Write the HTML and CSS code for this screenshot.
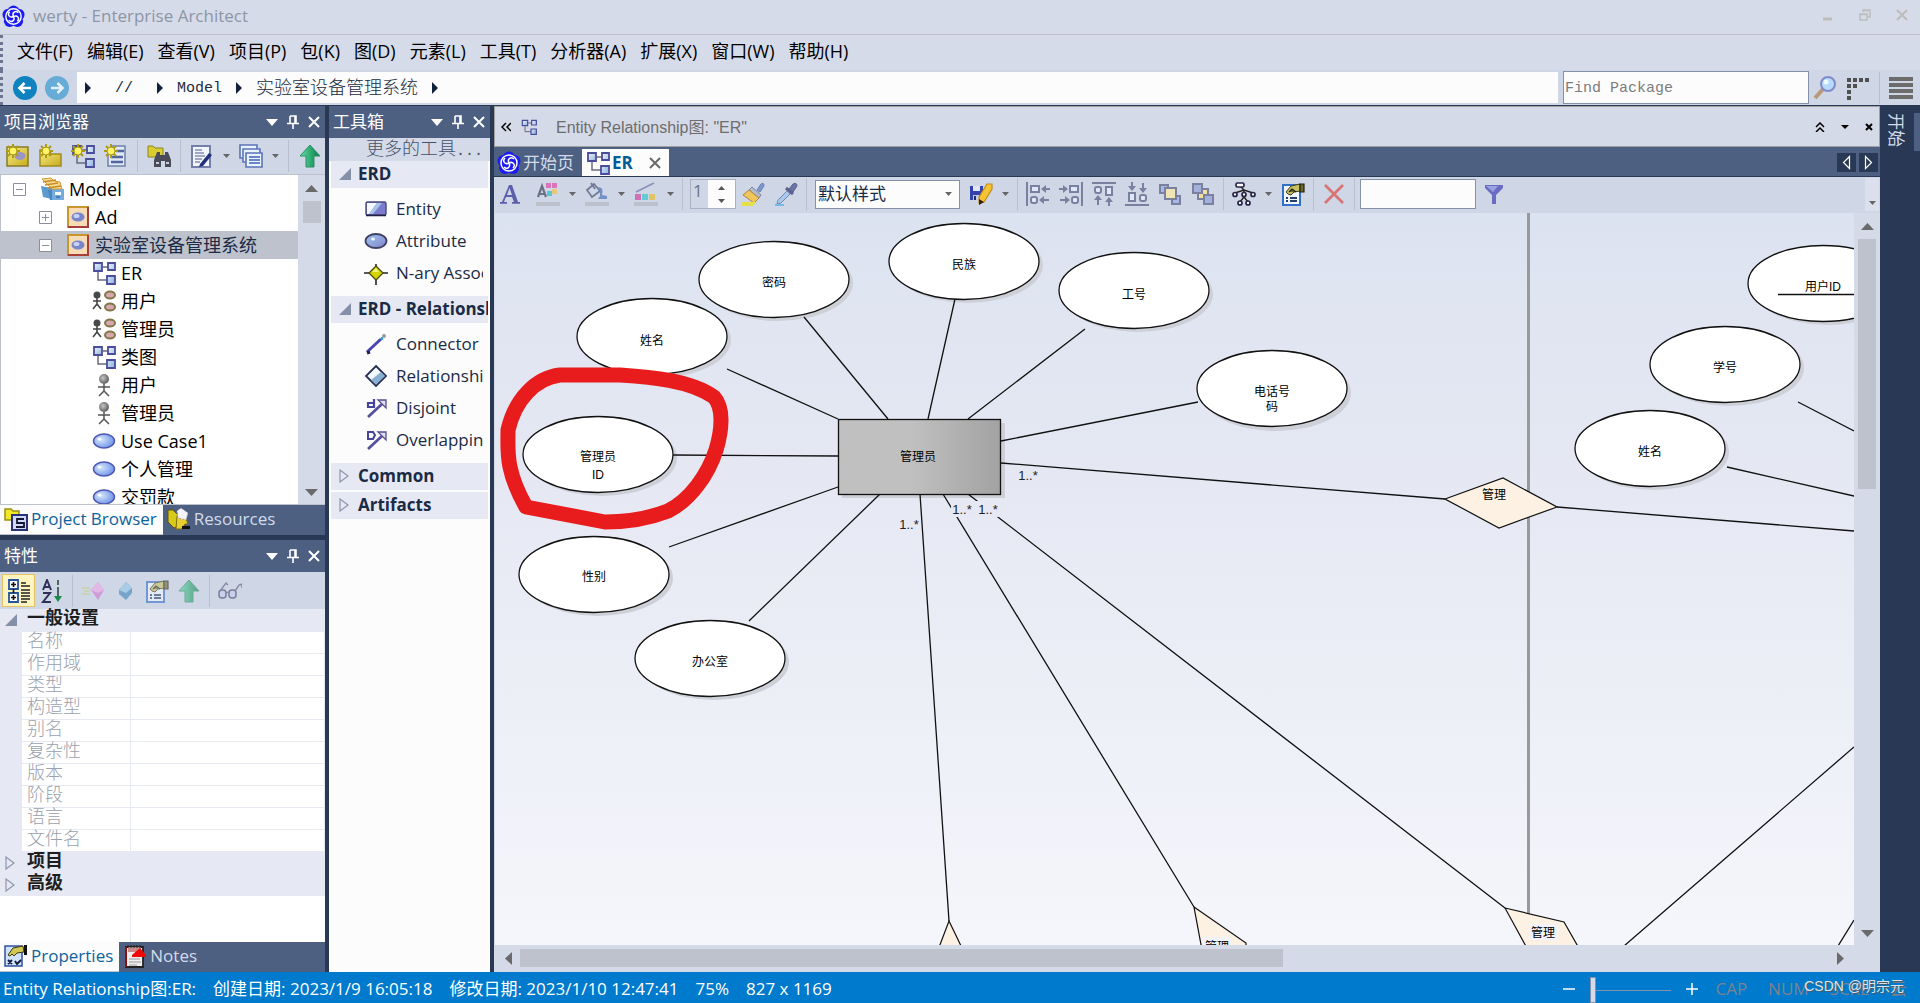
FILE: index.html
```html
<!DOCTYPE html>
<html lang="zh-CN">
<head>
<meta charset="utf-8">
<title>werty - Enterprise Architect</title>
<link rel="stylesheet" href="styles.css">
</head>
<body>
<svg class="defs" aria-hidden="true">
  <defs>
    <linearGradient id="steel" x1="0" y1="0" x2="1" y2="1"><stop offset="0" stop-color="#eef6fd"/><stop offset="1" stop-color="#8fb4dd"/></linearGradient>
    <linearGradient id="violet" x1="0" y1="0" x2="1" y2="1"><stop offset="0" stop-color="#9fc6ee"/><stop offset="1" stop-color="#8484cc"/></linearGradient>
    <linearGradient id="gold" x1="0" y1="0" x2="1" y2="1"><stop offset="0" stop-color="#f4ee88"/><stop offset="1" stop-color="#c9ab1c"/></linearGradient>
    <linearGradient id="green" x1="0" y1="0" x2="1" y2="0"><stop offset="0" stop-color="#5fe0a2"/><stop offset="1" stop-color="#067a49"/></linearGradient>
    <radialGradient id="oval" cx=".35" cy=".4" r=".8"><stop offset="0" stop-color="#d4e8fb"/><stop offset="1" stop-color="#5a82e8"/></radialGradient>
    <radialGradient id="ball" cx=".4" cy=".4" r=".7"><stop offset="0" stop-color="#c4c4c4"/><stop offset="1" stop-color="#505050"/></radialGradient>
    <linearGradient id="steelgrey" x1="0" y1="0" x2="1" y2="0"><stop offset="0" stop-color="#c0c0c0"/><stop offset=".45" stop-color="#c0c0c0"/><stop offset="1" stop-color="#a2a2a2"/></linearGradient>
  </defs>
  <symbol id="i-logo" viewBox="0 0 24 24"><g fill="#1c1cf0"><circle cx="12" cy="6.500" r="6"/><circle cx="17.500" cy="10" r="6"/><circle cx="16" cy="17" r="6"/><circle cx="8" cy="17" r="6"/><circle cx="6.500" cy="10" r="6"/></g><g fill="none" stroke="#fff" stroke-width="1.500"><circle cx="12" cy="12" r="8"/><path d="M12 12c-2-4 2-7 5-4M12 12c4-2 7 2 4 5M12 12c2 4-2 7-5 4M12 12c-4 2-7-2-4-5"/></g></symbol>
  <symbol id="i-spark" viewBox="0 0 14 14"><path d="M7 0v14M0 7h14M2 2l10 10M12 2L2 12" stroke="#b09a10" stroke-width="2"/><circle cx="7" cy="7" r="4" fill="#fff36a" stroke="#a89510"/></symbol>
  <symbol id="i-newpkg" viewBox="0 0 24 24"><path d="M2 3h21v19H2z" fill="url(#gold)" stroke="#8a7a28" stroke-width="1.5"/><ellipse cx="15" cy="12" rx="5.500" ry="4" fill="#9a94c8"/><use href="#i-spark" x="1" y="0" width="14" height="14"/></symbol>
  <symbol id="i-newfolder" viewBox="0 0 24 24"><path d="M2 6h9l2 4h10v12H2z" fill="url(#gold)" stroke="#a28a1c" stroke-width="1.500"/><use href="#i-spark" x="1" y="0" width="14" height="14"/></symbol>
  <symbol id="i-diagram" viewBox="0 0 24 24"><path d="M11 6h5M6 11v8h9" fill="none" stroke="#6a6a80" stroke-width="1.500"/><g fill="url(#steel)" stroke="#4c4c9c" stroke-width="1.800"><path d="M2 2h8v8H2z"/><path d="M16 2h7v7h-7zM15 15h8v8h-8z"/></g></symbol>
  <symbol id="i-newdiagram" viewBox="0 0 24 24"><use href="#i-diagram"/><use href="#i-spark" x="0" y="0" width="14" height="14"/></symbol>
  <symbol id="i-newelement" viewBox="0 0 24 24"><path d="M7 2h14v20H4V10z" fill="#dfe9f7" stroke="#7080a8" stroke-width="1.500"/><path d="M12 7h8M7 13h12M7 18h12" stroke="#54649c" stroke-width="2.500"/><use href="#i-spark" x="0" y="0" width="14" height="14"/></symbol>
  <symbol id="i-find" viewBox="0 0 24 24"><path d="M1 2h5l2 2h8v9H1z" fill="#d8cc30" stroke="#8e8420"/><path d="M7 23V16l3-8h3v3h5V8h3l3 8v7h-6v-6h-4v6z" fill="#4b4a58"/><path d="M9 19h3M19 19h3" stroke="#c8ccd8" stroke-width="2"/></symbol>
  <symbol id="i-doc" viewBox="0 0 24 24"><path d="M2 2h18v21H2z" fill="#f2f6fc" stroke="#7480ac" stroke-width="2"/><path d="M5 6h7M5 9h9M5 12h10M5 15h7M5 18h5" stroke="#8490b4" stroke-width="1.400"/><path d="M10 20l9-11 3 2-9 11-4 1z" fill="#26307c"/></symbol>
  <symbol id="i-windows" viewBox="0 0 24 24"><g fill="#eaf2fc" stroke="#5b74b8" stroke-width="1.600"><path d="M1 1h17v13H1z"/><path d="M4 5h17v13H4z"/><path d="M7 9h16v14H7z"/></g><path d="M10 13h11M10 16h11M10 19h11" stroke="#3d64b8" stroke-width="1.600"/></symbol>
  <symbol id="i-up" viewBox="0 0 24 24"><path d="M12 1l10 11h-6v11H8V12H2z" fill="url(#green)" stroke="#2f8f66"/></symbol>
  <symbol id="i-model" viewBox="0 0 24 24"><path d="M1 9l15 3v11L3 20z" fill="#5b9bd0"/><path d="M8 13h16v10H10z" fill="#4d87c0"/><path d="M12 12h12v11H12z" fill="#74ace0"/><path d="M2 2l9-1 3 3 6 1 2 7h-10z" fill="#f7dc92" stroke="#cf9a34"/><path d="M3 5l13-2M5 8l13-2M7 11l14-2" stroke="#c98b28" stroke-width="1.400"/><path d="M15 15h6v3h-6z" fill="#fff"/><path d="M16 20h4" stroke="#204c7c"/></symbol>
  <symbol id="i-package" viewBox="0 0 24 24"><path d="M2 2h20v20H2z" fill="#f7dcb6" stroke="#c8962c" stroke-width="2"/><path d="M22 2v20H2" fill="none" stroke="#a83e38" stroke-width="2"/><ellipse cx="12" cy="12" rx="6.500" ry="4.500" fill="#7a86cc"/><ellipse cx="10.500" cy="11" rx="3" ry="2" fill="#c9d4f4"/></symbol>
  <symbol id="i-actor" viewBox="0 0 24 24"><circle cx="12" cy="6" r="5" fill="url(#ball)"/><path d="M12 11v7M6 14h12M12 18l-5 5M12 18l5 5" fill="none" stroke="#555" stroke-width="1.500"/></symbol>
  <symbol id="i-usecases" viewBox="0 0 24 24"><circle cx="5" cy="6" r="3.500" fill="#484848"/><path d="M5 9v6M1 12h8M5 15l-4 5M5 15l4 5" fill="none" stroke="#444" stroke-width="1.600"/><g fill="#d8a8ac" stroke="#807848" stroke-width="2"><ellipse cx="18" cy="6" rx="5" ry="3.500"/><ellipse cx="18" cy="18" rx="5" ry="3.500"/></g></symbol>
  <symbol id="i-oval" viewBox="0 0 24 24"><ellipse cx="12" cy="12" rx="10.500" ry="7" fill="url(#oval)" stroke="#5058b0" stroke-width="1.500"/><ellipse cx="7.500" cy="10" rx="2" ry="1.500" fill="#fff"/></symbol>
  <symbol id="i-browser" viewBox="0 0 24 24"><path d="M1 2h6l2 2h6v9H1z" fill="#f0e828" stroke="#9a9010" stroke-width="1.500"/><path d="M8 8h15v15H8z" fill="#cfd8f4" stroke="#2c3278" stroke-width="2"/><path d="M20 12h-7v4h7v4h-8" fill="none" stroke="#151533" stroke-width="1.800"/></symbol>
  <symbol id="i-resources" viewBox="0 0 24 24"><path d="M1 3h5l5 5 1 11-5 2-6-6z" fill="#d8c818" stroke="#5c5410"/><path d="M10 9h8l3 8h-3l-3 5h-6z" fill="#e8d030" stroke="#7a6c10"/><path d="M14 1l7 5-2 7-8-2-1-7z" fill="#f4f4fa" stroke="#9a9aae" stroke-dasharray="2 1.500"/><path d="M15 19h8v3h-8z" fill="#111"/></symbol>
  <symbol id="i-categ" viewBox="0 0 24 24"><path d="M2 1h9v9H2zM2 14h9v9H2z" fill="#fff" stroke="#24549c" stroke-width="1.800"/><path d="M4 5.500h5M6.500 3v5M4 18.500h5M6.500 16v5M6.500 10v4" stroke="#111" stroke-width="1.600"/><path d="M14 4h5M14 7h9M14 11h9M14 14h9M14 17h9M14 20h9M14 23h6" stroke="#222" stroke-width="1.400"/></symbol>
  <symbol id="i-az" viewBox="0 0 24 24"><path d="M3 11l4-10 4 10M4 8h6M3 14h7L3 23h8" fill="none" stroke="#303058" stroke-width="2"/><path d="M18 1v5M18 8v12" stroke="#2c4c40" stroke-width="1.600"/><path d="M14 17l4 6 4-6z" fill="#188a48"/></symbol>
  <symbol id="i-pink" viewBox="0 0 24 24"><path d="M1 9h8M3 12h6M1 15h8" stroke="#c8d4a4" stroke-width="1.500"/><path d="M17 3l6 8-6 10-7-10z" fill="#cf9bd8"/><path d="M17 3l6 8-6 3-7-3z" fill="#e2b9e6"/></symbol>
  <symbol id="i-blue" viewBox="0 0 24 24"><path d="M13 3l6 6v5l-6 7-7-6v-4z" fill="#78a4cc"/><path d="M13 3l6 6-6 5-7-3z" fill="#a9cbe6"/></symbol>
  <symbol id="i-props" viewBox="0 0 24 24"><path d="M2 3h17v20H2z" fill="#f2f7fe" stroke="#3470c8" stroke-width="2"/><path d="M5 16h2M9 16h7M5 19h2M9 19h7" stroke="#24406c" stroke-width="1.800"/><path d="M5 10l5-6 9-2v7l-6 1-3 3-3-1z" fill="#c8c060" stroke="#403c14"/><path d="M8 10l3-3 4 3M19 2h4v8h-4z" fill="#6b6830" stroke="#22200a" stroke-width="1.200"/></symbol>
  <symbol id="i-glasses" viewBox="0 0 24 24"><g fill="#c9d0ec" stroke="#7a7e9c" stroke-width="1.500"><rect x="1" y="11" width="7" height="8" rx="3"/><rect x="11" y="11" width="7" height="8" rx="3"/></g><path d="M8 14l3-1M2 12l6-8 2 2M17 12l4-6 3-1v4" fill="none" stroke="#888ca4" stroke-width="1.400"/></symbol>
  <symbol id="i-propstab" viewBox="0 0 24 24"><path d="M1 2h17v20H1z" fill="#cfe2fa" stroke="#30509c" stroke-width="1.500"/><path d="M4 16l4 4M8 16l-4 4M11 17l2 3 4-4" fill="none" stroke="#10183c" stroke-width="1.800"/><path d="M4 11l5-7 10-2 1 6-7 1-3 3-2-2-2 2z" fill="#d0c850" stroke="#3c3810"/><path d="M20 1h3v10h-3z" fill="#111"/></symbol>
  <symbol id="i-notes" viewBox="0 0 24 24"><path d="M3 3h17v20H3z" fill="#efefef" stroke="#222" stroke-width="1.800"/><path d="M2 3h2v20H2z" fill="#8c1010"/><path d="M5 3h13v5H5z" fill="#c98a8a"/><path d="M5 1v3M8 1v3M11 1v3M14 1v3M17 1v3" stroke="#222"/><path d="M9 11l8-7 6 7v2H9z" fill="#f00808"/><path d="M6 15h11M6 18h12M6 21h8" stroke="#999" stroke-width="1.200"/></symbol>
  <symbol id="i-entity" viewBox="0 0 24 24"><path d="M2 5h20v13H2z" fill="#7c7ccc"/><path d="M3 6h10L5 17H3z" fill="#f4f8ff"/><path d="M13 6h5L9 17H5z" fill="#a9c4ec"/><rect x="2" y="5" width="20" height="13" rx="1.500" fill="none" stroke="#4a4a78" stroke-width="1.400"/><path d="M2 18.500h20" stroke="#222248" stroke-width="1.500"/></symbol>
  <symbol id="i-attribute" viewBox="0 0 24 24"><ellipse cx="12" cy="12" rx="10.500" ry="7" fill="url(#violet)" stroke="#3e4264" stroke-width="1.800"/><ellipse cx="9" cy="10" rx="2" ry="1.500" fill="#e8f6ff"/></symbol>
  <symbol id="i-nary" viewBox="0 0 24 24"><path d="M0 12h24M12 3v21" stroke="#222" stroke-width="1.600"/><path d="M12 5l7 7-7 7-7-7z" fill="#d4d400" stroke="#4c4c10" stroke-width="1.300"/><path d="M12 7l3 4H8z" fill="#f2f27a"/></symbol>
  <symbol id="i-connector" viewBox="0 0 24 24"><path d="M3 20L17 7" stroke="#4a44b0" stroke-width="3"/><path d="M3 21l3-1" stroke="#20205c" stroke-width="3"/><path d="M17 7l2-1" stroke="#22a0d0" stroke-width="3"/><circle cx="20" cy="4" r="2" fill="#999"/></symbol>
  <symbol id="i-rel" viewBox="0 0 24 24"><path d="M12 2l10 10-10 10L2 12z" fill="#f2fafe" stroke="#262e50" stroke-width="1.800"/><path d="M7 16L17 8l4 4-9 8.500z" fill="#88aed2"/></symbol>
  <symbol id="i-disjoint" viewBox="0 0 24 24"><path d="M4 21L18 8" stroke="#54509c" stroke-width="2.800"/><path d="M14 4h8v8z" fill="#dcdcf4" stroke="#54508c" stroke-width="1.300"/><path d="M10 3v9M9 7H4v4h6" fill="none" stroke="#48449c" stroke-width="2.200"/></symbol>
  <symbol id="i-overlap" viewBox="0 0 24 24"><path d="M4 21L18 8" stroke="#54509c" stroke-width="2.800"/><path d="M14 4h8v8z" fill="#dcdcf4" stroke="#54508c" stroke-width="1.300"/><path d="M4 4h5l2 3-2 4H4z" fill="none" stroke="#48449c" stroke-width="2"/></symbol>
  <symbol id="i-font" viewBox="0 0 24 24"><path d="M2 20h7v1.800H2zM14 20h8v1.800h-8zM4 20L11 3h3l6 17h-4l-2-5H8l-2 5zM9 13h5l-2.500-7z" fill="#5c60ac" fill-rule="evenodd"/></symbol>
  <symbol id="i-fontcolor" viewBox="0 0 24 24"><path d="M2 15L6 4l4 11M3 12h6" fill="none" stroke="#6c7084" stroke-width="2.200"/><path d="M10 1h5v5h-5zM16 1h5v5h-5z" fill="#dc74bc"/><path d="M16 7h5v5h-5z" fill="#e8c878"/><path d="M11 9h5v5h-5z" fill="#58c8d0"/><path d="M0 20h24v4H0z" fill="#bcc1cc"/></symbol>
  <symbol id="i-fill" viewBox="0 0 24 24"><path d="M2 8l7-6 6 7-8 6z" fill="#ced8ec" stroke="#747a94" stroke-width="1.800"/><path d="M6 1l4 6" stroke="#747a94" stroke-width="1.800"/><path d="M13 5c5 0 5 4 4 8l5 1v3h-9l2-3V8z" fill="#7292c8"/><path d="M0 20h24v4H0z" fill="#bcc1cc"/></symbol>
  <symbol id="i-line" viewBox="0 0 24 24"><path d="M2 10L20 1" stroke="#8a90bc" stroke-width="1.800"/><path d="M1 12h6v6H1z" fill="#d070b8"/><path d="M8 12h6v6H8z" fill="#62ccd4"/><path d="M15 12h6v6h-6z" fill="#e0c468"/><path d="M0 20h24v4H0z" fill="#bcc1cc"/></symbol>
  <symbol id="i-brush" viewBox="0 0 24 24"><path d="M16 8l4-6q3-2 3 2l-4 6z" fill="#7c98d0" stroke="#6480b8"/><path d="M11 5l9 8-2 3L8 8z" fill="#b4bccc" stroke="#7c8498"/><path d="M8 8l10 8-5 5-11-8z" fill="#f0c65c" stroke="#b08a3c"/><path d="M1 21h14M1 23h11" stroke="#e6e048" stroke-width="1.800"/></symbol>
  <symbol id="i-pipette" viewBox="0 0 24 24"><path d="M15 7l4-5q4-2 4 2l-4 6z" fill="#6c74a4" stroke="#5c6290"/><path d="M12 6l7 6" stroke="#5c6290" stroke-width="3"/><path d="M13 9l3 3L7 21l-4 1 1-4z" fill="#a8c8ec" stroke="#7488b0"/><path d="M1 23h9" stroke="#74b8ec" stroke-width="2"/></symbol>
  <symbol id="i-savestyle" viewBox="0 0 24 24"><path d="M1 4h13v14H1z" fill="#3442ac"/><path d="M4 4h7v5H4z" fill="#dfe5fa"/><path d="M4 13h6v5H4z" fill="#c4ccec"/><path d="M5 14h2v4H5z" fill="#20287c"/><path d="M18 2h5v5l-8 13-5 1v-6z" fill="#f4c434" stroke="#c48a1c" stroke-width="1.200"/><path d="M10 17v6l5-3z" fill="#302010"/></symbol>
  <symbol id="i-al" viewBox="0 0 24 24"><path d="M1 0v24" stroke="#7c80a0" stroke-width="2"/><g fill="#dceaf8" stroke="#7c80a0" stroke-width="2"><path d="M5 4h8v6H5z"/><rect x="5" y="15" width="6" height="6" rx="2"/></g><path d="M16 7h8M14 18h9" stroke="#7c80a0" stroke-width="2"/><path d="M20 3v8l-5-4zM18 14v8l-5-4z" fill="#7c80a0"/></symbol>
  <symbol id="i-front" viewBox="0 0 24 24"><g stroke="#7c80a0" stroke-width="2"><path d="M2 3h8v8H2zM14 14h8v8h-8z" fill="#a8b8e4"/><path d="M7 6h11v11H7z" fill="#f0e4b4"/></g></symbol>
  <symbol id="i-back" viewBox="0 0 24 24"><g stroke="#7c80a0" stroke-width="2"><path d="M7 7h10v10H7z" fill="#f0e0a0"/><path d="M2 2h9v9H2zM13 13h9v9h-9z" fill="#a4b0dc"/></g></symbol>
  <symbol id="i-tree" viewBox="0 0 24 24"><path d="M8 4l5 5M12 8v7M3 11l9-3 9 3M12 15l-4 5M12 15l4 5" fill="none" stroke="#222" stroke-width="1.400"/><g fill="#fff" stroke="#282448" stroke-width="1.700"><rect x="4" y="1" width="8" height="4" rx="1.500"/><circle cx="3" cy="12.500" r="2"/><circle cx="12" cy="12.500" r="2"/><circle cx="21" cy="12.500" r="2"/><circle cx="8" cy="21" r="2"/><circle cx="16" cy="21" r="2"/></g></symbol>
  <symbol id="i-x" viewBox="0 0 24 24"><path d="M3 3l18 18M21 3L3 21" stroke="#d87474" stroke-width="2.800"/></symbol>
  <symbol id="i-funnel" viewBox="0 0 24 24"><path d="M3 3h18v3l-7 7v9h-4v-9L3 6z" fill="#6a6cc4"/><path d="M4 4h12l-5 6z" fill="#9aa4dc"/></symbol>
  <symbol id="i-caret" viewBox="0 0 7 4"><path d="M0 0h7L3.500 4z" fill="#666"/></symbol>
  <symbol id="i-pin" viewBox="0 0 12 14"><path d="M3 1h6v7M3 1v7M8 1v7M0 8.500h12M6 9v5" fill="none" stroke="#fff" stroke-width="1.600"/></symbol>
  <symbol id="i-close" viewBox="0 0 12 12"><path d="M1 1l10 10M11 1L1 11" stroke="currentColor" stroke-width="2"/></symbol>
  <symbol id="i-down" viewBox="0 0 12 7"><path d="M0 0h12L6 7z" fill="currentColor"/></symbol>
  <symbol id="i-open" viewBox="0 0 12 12"><path d="M12 0v12H0z" fill="#8490a8"/></symbol>
  <symbol id="i-shut" viewBox="0 0 12 14"><path d="M1 1v12l8-6z" fill="none" stroke="#8c96ac" stroke-width="1.200"/></symbol>
  <symbol id="i-crumb" viewBox="0 0 6 12"><path d="M0 0v12l6-6z" fill="#12223c"/></symbol>
</svg>

<header class="titlebar">
  <svg class="ic"><use href="#i-logo"/></svg>
  <span class="title">werty - Enterprise Architect</span>
  <div class="winctl">
    <button aria-label="最小化"><svg width="12" height="12"><path d="M1 10h9" stroke="#bdbdbd" stroke-width="3"/></svg></button>
    <button aria-label="还原"><svg width="12" height="12"><path d="M4 3V1h7v7H9M3.500 1.500H11M1 5h7v6H1zM1 5.500h7" fill="none" stroke="#bdbdbd" stroke-width="1.500"/></svg></button>
    <button aria-label="关闭"><svg width="12" height="12"><use href="#i-close"/></svg></button>
  </div>
</header>

<nav class="menubar">
  <button>文件(F)</button><button>编辑(E)</button><button>查看(V)</button><button>项目(P)</button><button>包(K)</button><button>图(D)</button><button>元素(L)</button><button>工具(T)</button><button>分析器(A)</button><button>扩展(X)</button><button>窗口(W)</button><button>帮助(H)</button>
</nav>

<div class="navbar">
  <button aria-label="后退"><svg class="ic"><circle cx="12" cy="12" r="12" fill="#1182c0"/><path d="M18 12H7M11.500 7L6.500 12l5 5" fill="none" stroke="#fff" stroke-width="2.600"/></svg></button>
  <button aria-label="前进"><svg class="ic"><circle cx="12" cy="12" r="12" fill="#66acd6"/><path d="M6 12h11M12.500 7l5 5-5 5" fill="none" stroke="#e4f0f8" stroke-width="2.600"/></svg></button>
  <div class="crumbs">
    <svg class="crumb"><use href="#i-crumb"/></svg><a href="#root">//</a>
    <svg class="crumb"><use href="#i-crumb"/></svg><a href="#model">Model</a>
    <svg class="crumb"><use href="#i-crumb"/></svg><a class="cjk" href="#lab">实验室设备管理系统</a>
    <svg class="crumb"><use href="#i-crumb"/></svg>
  </div>
  <input class="find" type="text" placeholder="Find Package" aria-label="Find Package">
  <div class="navtools">
    <button aria-label="查找"><svg class="ic"><path d="M2 22l9-10" stroke="#b89878" stroke-width="4"/><circle cx="15" cy="8" r="7" fill="#b4dcfa" stroke="#8488cc" stroke-width="2"/><circle cx="13" cy="6" r="2.500" fill="#effaff"/></svg></button>
    <button aria-label="布局"><svg class="ic"><path d="M1 4h23M1 10h11M1 16h5M1 22h5" stroke="#505050" stroke-width="4" stroke-dasharray="4 2"/></svg></button>
    <i class="sep"></i>
    <button aria-label="菜单"><svg class="ic"><path d="M0 3h24M0 9h24M0 15h24M0 21h24" stroke="#6c6c6c" stroke-width="4"/></svg></button>
  </div>
</div>

<div class="workspace">
  <div class="left">
    <section class="panel browser">
      <h2 class="caption">项目浏览器<span class="capctl"><button aria-label="选项"><svg width="12" height="7"><use href="#i-down"/></svg></button><button aria-label="固定"><svg width="12" height="14"><use href="#i-pin"/></svg></button><button aria-label="关闭"><svg width="12" height="12"><use href="#i-close"/></svg></button></span></h2>
      <div class="toolbar">
        <button aria-label="新建包"><svg class="ic"><use href="#i-newpkg"/></svg></button>
        <button aria-label="新建文件夹"><svg class="ic"><use href="#i-newfolder"/></svg></button>
        <button aria-label="新建图"><svg class="ic"><use href="#i-newdiagram"/></svg></button>
        <button aria-label="新建元素"><svg class="ic"><use href="#i-newelement"/></svg></button>
        <i class="sep"></i>
        <button aria-label="查找"><svg class="ic"><use href="#i-find"/></svg></button>
        <i class="sep"></i>
        <button aria-label="文档"><svg class="ic"><use href="#i-doc"/></svg><svg class="caret"><use href="#i-caret"/></svg></button>
        <button aria-label="窗口"><svg class="ic"><use href="#i-windows"/></svg><svg class="caret"><use href="#i-caret"/></svg></button>
        <i class="sep"></i>
        <button aria-label="上移"><svg class="ic"><use href="#i-up"/></svg></button>
      </div>
      <div class="treebox">
        <ul class="tree">
          <li class="l0"><svg class="box"><path d="M.5 .5h12v12H.5z M3 6.500h7" /></svg><svg class="ic"><use href="#i-model"/></svg>Model</li>
          <li class="l1"><svg class="box"><path d="M.5 .5h12v12H.5z M3 6.500h7M6.500 3v7" /></svg><svg class="ic"><use href="#i-package"/></svg>Ad</li>
          <li class="l1 sel"><svg class="box"><path d="M.5 .5h12v12H.5z M3 6.500h7" /></svg><svg class="ic"><use href="#i-package"/></svg>实验室设备管理系统</li>
          <li class="l2"><svg class="ic"><use href="#i-diagram"/></svg>ER</li>
          <li class="l2"><svg class="ic"><use href="#i-usecases"/></svg>用户</li>
          <li class="l2"><svg class="ic"><use href="#i-usecases"/></svg>管理员</li>
          <li class="l2"><svg class="ic"><use href="#i-diagram"/></svg>类图</li>
          <li class="l2"><svg class="ic"><use href="#i-actor"/></svg>用户</li>
          <li class="l2"><svg class="ic"><use href="#i-actor"/></svg>管理员</li>
          <li class="l2"><svg class="ic"><use href="#i-oval"/></svg>Use Case1</li>
          <li class="l2"><svg class="ic"><use href="#i-oval"/></svg>个人管理</li>
          <li class="l2"><svg class="ic"><use href="#i-oval"/></svg>交罚款</li>
        </ul>
        <div class="vscroll"><svg class="arr"><path d="M0 7h13L6.500 0z"/></svg><span class="thumb small"></span><svg class="arr end"><path d="M0 0h13L6.500 7z"/></svg></div>
      </div>
      <div class="tabs"><button class="on"><svg class="ic"><use href="#i-browser"/></svg>Project Browser</button><button><svg class="ic"><use href="#i-resources"/></svg>Resources</button></div>
    </section>

    <section class="panel props">
      <h2 class="caption">特性<span class="capctl"><button aria-label="选项"><svg width="12" height="7"><use href="#i-down"/></svg></button><button aria-label="固定"><svg width="12" height="14"><use href="#i-pin"/></svg></button><button aria-label="关闭"><svg width="12" height="12"><use href="#i-close"/></svg></button></span></h2>
      <div class="toolbar ptools">
        <button class="pressed" aria-label="分类"><svg class="ic"><use href="#i-categ"/></svg></button>
        <button aria-label="排序"><svg class="ic"><use href="#i-az"/></svg></button>
        <i class="sep"></i>
        <button aria-label="属性"><svg class="ic"><use href="#i-pink"/></svg></button>
        <button aria-label="操作"><svg class="ic"><use href="#i-blue"/></svg></button>
        <button class="dim" aria-label="特性页"><svg class="ic"><use href="#i-props"/></svg></button>
        <button class="dim" aria-label="上移"><svg class="ic"><use href="#i-up"/></svg></button>
        <i class="sep"></i>
        <button aria-label="查看"><svg class="ic"><use href="#i-glasses"/></svg></button>
      </div>
      <table class="grid">
        <colgroup><col class="c0"><col class="c1"><col></colgroup>
        <tr class="grp"><th><svg width="12" height="12"><use href="#i-open"/></svg></th><th colspan="2">一般设置</th></tr>
        <tr><th></th><td>名称</td><td></td></tr>
        <tr><th></th><td>作用域</td><td></td></tr>
        <tr><th></th><td>类型</td><td></td></tr>
        <tr><th></th><td>构造型</td><td></td></tr>
        <tr><th></th><td>别名</td><td></td></tr>
        <tr><th></th><td>复杂性</td><td></td></tr>
        <tr><th></th><td>版本</td><td></td></tr>
        <tr><th></th><td>阶段</td><td></td></tr>
        <tr><th></th><td>语言</td><td></td></tr>
        <tr><th></th><td>文件名</td><td></td></tr>
        <tr class="grp"><th><svg width="12" height="14"><use href="#i-shut"/></svg></th><th colspan="2">项目</th></tr>
        <tr class="grp"><th><svg width="12" height="14"><use href="#i-shut"/></svg></th><th colspan="2">高级</th></tr>
      </table>
      <div class="gridrest"></div>
      <div class="tabs"><button class="on"><svg class="ic"><use href="#i-propstab"/></svg>Properties</button><button><svg class="ic"><use href="#i-notes"/></svg>Notes</button></div>
    </section>
  </div>

  <section class="panel toolbox">
    <h2 class="caption">工具箱<span class="capctl"><button aria-label="选项"><svg width="12" height="7"><use href="#i-down"/></svg></button><button aria-label="固定"><svg width="12" height="14"><use href="#i-pin"/></svg></button><button aria-label="关闭"><svg width="12" height="12"><use href="#i-close"/></svg></button></span></h2>
    <button class="more">更多的工具<span lang="en">...</span></button>
    <div class="tbody">
      <h3><svg width="12" height="12"><use href="#i-open"/></svg>ERD</h3>
      <ul>
        <li><svg class="ic"><use href="#i-entity"/></svg><span>Entity</span></li>
        <li><svg class="ic"><use href="#i-attribute"/></svg><span>Attribute</span></li>
        <li><svg class="ic"><use href="#i-nary"/></svg><span>N-ary Association</span></li>
      </ul>
      <h3><svg width="12" height="12"><use href="#i-open"/></svg>ERD - Relationships</h3>
      <ul>
        <li><svg class="ic"><use href="#i-connector"/></svg><span>Connector</span></li>
        <li><svg class="ic"><use href="#i-rel"/></svg><span>Relationship</span></li>
        <li><svg class="ic"><use href="#i-disjoint"/></svg><span>Disjoint</span></li>
        <li><svg class="ic"><use href="#i-overlap"/></svg><span>Overlapping</span></li>
      </ul>
      <h3><svg width="12" height="14"><use href="#i-shut"/></svg>Common</h3>
      <h3><svg width="12" height="14"><use href="#i-shut"/></svg>Artifacts</h3>
    </div>
  </section>

  <main class="main">
    <div class="viewcap">
      <svg width="10" height="10"><path d="M5 1L1 5l4 4M10 1L6 5l4 4" fill="none" stroke="#000" stroke-width="1.500"/></svg>
      <svg width="16" height="16"><use href="#i-diagram"/></svg>
      <span>Entity Relationship图: "ER"</span>
      <div class="viewctl">
        <button aria-label="收起"><svg width="10" height="10"><path d="M1 5l4-4 4 4M1 10l4-4 4 4" fill="none" stroke="#000" stroke-width="1.500"/></svg></button>
        <button aria-label="选项"><svg width="8" height="4"><path d="M0 0h8L4 4z"/></svg></button>
        <button aria-label="关闭"><svg width="8" height="8"><path d="M1 1l6 6M7 1L1 7" stroke="#000" stroke-width="2"/></svg></button>
      </div>
    </div>
    <div class="doctabs">
      <button class="doctab"><svg class="ic"><use href="#i-logo"/></svg>开始页</button>
      <button class="doctab on"><svg class="ic"><use href="#i-diagram"/></svg>ER<svg class="x" width="12" height="12"><use href="#i-close"/></svg></button>
      <div class="tabnav">
        <button aria-label="上一页"><svg width="19" height="19"><path d="M12.500 3.500v12l-6-6z" fill="none" stroke="#fff" stroke-width="1.200"/></svg></button>
        <button aria-label="下一页"><svg width="19" height="19"><path d="M6.500 3.500v12l6-6z" fill="none" stroke="#fff" stroke-width="1.200"/></svg></button>
      </div>
    </div>
    <div class="toolbar dtools">
      <button class="wide" aria-label="字体"><svg class="ic"><use href="#i-font"/></svg></button>
      <button aria-label="文字颜色"><svg class="ic"><use href="#i-fontcolor"/></svg><svg class="caret"><use href="#i-caret"/></svg></button>
      <button aria-label="填充颜色"><svg class="ic"><use href="#i-fill"/></svg><svg class="caret"><use href="#i-caret"/></svg></button>
      <button aria-label="线条颜色"><svg class="ic"><use href="#i-line"/></svg><svg class="caret"><use href="#i-caret"/></svg></button>
      <i class="sep"></i>
      <div class="spin"><input type="text" value="1" aria-label="线宽"><svg width="27" height="28"><path d="M10 10h7l-3.500-4zM10 19h7l-3.500 4z" fill="#555"/></svg></div>
      <button aria-label="格式刷"><svg class="ic"><use href="#i-brush"/></svg></button>
      <button aria-label="取色"><svg class="ic"><use href="#i-pipette"/></svg></button>
      <i class="sep"></i>
      <div class="selwrap"><select aria-label="样式"><option>默认样式</option></select><svg class="caret"><use href="#i-caret"/></svg></div>
      <button aria-label="保存样式"><svg class="ic"><use href="#i-savestyle"/></svg><svg class="caret"><use href="#i-caret"/></svg></button>
      <i class="sep"></i>
      <button aria-label="左对齐"><svg class="ic"><use href="#i-al"/></svg></button>
      <button aria-label="右对齐"><svg class="ic flip"><use href="#i-al"/></svg></button>
      <button aria-label="顶对齐"><svg class="ic turn"><use href="#i-al"/></svg></button>
      <button aria-label="底对齐"><svg class="ic turnback"><use href="#i-al"/></svg></button>
      <button aria-label="置前"><svg class="ic"><use href="#i-front"/></svg></button>
      <button aria-label="置后"><svg class="ic"><use href="#i-back"/></svg></button>
      <i class="sep"></i>
      <button aria-label="自动布局"><svg class="ic"><use href="#i-tree"/></svg><svg class="caret"><use href="#i-caret"/></svg></button>
      <button aria-label="图属性"><svg class="ic"><use href="#i-props"/></svg></button>
      <i class="sep"></i>
      <button aria-label="删除"><svg class="ic"><use href="#i-x"/></svg></button>
      <i class="sep"></i>
      <input class="filter" type="text" aria-label="过滤">
      <button aria-label="筛选"><svg class="ic"><use href="#i-funnel"/></svg></button>
      <button class="overflow" aria-label="更多"><svg class="caret"><use href="#i-caret"/></svg></button>
    </div>
    <div class="view">
      <svg class="canvas">
        <g transform="translate(-495 -213)">
          <path class="pageedge" d="M1528.500 213V946"/>
          <g class="shadow">
            <ellipse cx="602" cy="458" rx="75" ry="38"/><ellipse cx="656" cy="340" rx="75" ry="38"/><ellipse cx="778" cy="283" rx="75" ry="38"/><ellipse cx="968" cy="265" rx="75" ry="38"/><ellipse cx="1138" cy="294" rx="75" ry="38"/><ellipse cx="1276" cy="393" rx="75" ry="38"/><ellipse cx="598" cy="578" rx="75" ry="38"/><ellipse cx="714" cy="662" rx="75" ry="38"/><ellipse cx="1827" cy="287" rx="75" ry="38"/><ellipse cx="1729" cy="368" rx="75" ry="38"/><ellipse cx="1654" cy="452" rx="75" ry="38"/>
            <rect x="842" y="423" width="163" height="75"/>
          </g>
          <g class="wire">
            <path d="M727 369L838 419M804 317L888 419M955 299L928 419M1085 329L968 419M1001 441L1198 402M673 455L838 456M669 547L838 487M749 621L880 494"/>
            <path d="M1001 463L1445 499M1557 507L1854 531M920 494L949 921M943 494L1194 907M968 494L1505 908"/>
            <path d="M1798 402L1854 431M1727 467L1854 496M1854 747L1624 946M1838 946L1854 920"/>
          </g>
          <g class="node">
            <ellipse cx="598" cy="454.500" rx="75" ry="38"/><ellipse cx="652" cy="336.500" rx="75" ry="38"/><ellipse cx="774" cy="279.500" rx="75" ry="38"/><ellipse cx="964" cy="261.500" rx="75" ry="38"/><ellipse cx="1134" cy="290.500" rx="75" ry="38"/><ellipse cx="1272" cy="388.500" rx="75" ry="38"/><ellipse cx="594" cy="574.500" rx="75" ry="38"/><ellipse cx="710" cy="658.500" rx="75" ry="38"/><ellipse cx="1823" cy="283.500" rx="75" ry="38"/><ellipse cx="1725" cy="364.500" rx="75" ry="38"/><ellipse cx="1650" cy="448.500" rx="75" ry="38"/>
            <rect x="838.500" y="419.500" width="162" height="75" fill="url(#steelgrey)"/>
          </g>
          <g class="rhomb">
            <path d="M1445 499L1503 478L1557 507L1499 528Z"/>
            <path d="M949 921L963 950H938Z"/>
            <path d="M1194 907L1246 943V950H1202Z"/>
            <path d="M1505 908L1564 922L1580 950H1528Z"/>
          </g>
          <path class="wire" d="M1778 294.500H1860"/>
          <g class="cut"><rect x="951" y="501" width="50" height="16"/><rect x="1530" y="924" width="27" height="16"/><rect x="1202" y="937" width="29" height="16"/></g>
          <g class="label">
            <text x="598" y="461">管理员</text><text x="598" y="479">ID</text>
            <text x="652" y="345">姓名</text><text x="774" y="287">密码</text><text x="964" y="269">民族</text><text x="1134" y="299">工号</text>
            <text x="1272" y="396">电话号</text><text x="1272" y="411">码</text><text x="594" y="581">性别</text><text x="710" y="666">办公室</text>
            <text x="918" y="461">管理员</text><text x="1823" y="291">用户ID</text><text x="1725" y="372">学号</text><text x="1650" y="456">姓名</text>
            <text x="1494" y="499">管理</text><text x="1543" y="937">管理</text><text x="1217" y="951">管理</text>
          </g>
          <g class="mult"><text x="1028" y="480">1..*</text><text x="962" y="514">1..*</text><text x="988" y="514">1..*</text><text x="909" y="529">1..*</text></g>
          <path class="marker" d="M560 375H620C650 377 690 380 714 397C724 408 722 430 716 450C708 475 690 500 668 511C650 518 630 522 605 522L526 507C505 470 508 450 508 430C515 400 535 378 560 375Z"/>
        </g>
      </svg>
      <div class="vscroll tall"><svg class="arr"><path d="M0 7h13L6.500 0z"/></svg><span class="thumb"></span><svg class="arr end"><path d="M0 0h13L6.500 7z"/></svg></div>
      <div class="hscroll"><svg width="7" height="13"><path d="M7 0v13L0 6.500z"/></svg><span class="thumb"></span><svg class="end" width="7" height="13"><path d="M0 0v13l7-6.500z"/></svg></div>
      <div class="corner"></div>
    </div>
  </main>

  <aside class="dock"><button>开始</button></aside>
</div>

<footer class="status">
  <span>Entity Relationship图:ER:</span><span>创建日期: 2023/1/9 16:05:18</span><span>修改日期: 2023/1/10 12:47:41</span><span>75%</span><span>827 x 1169</span>
  <div class="zoom">
    <button aria-label="缩小"><svg width="12" height="12"><path d="M0 6h12" stroke="#fff" stroke-width="1.500"/></svg></button>
    <input type="range" min="0" max="100" value="0" aria-label="缩放">
    <button aria-label="放大"><svg width="12" height="12"><path d="M0 6h12M6 0v12" stroke="#fff" stroke-width="1.500"/></svg></button>
  </div>
  <span class="key">CAP</span><span class="key">NUM</span><span class="key">SCRL</span><span class="key">云</span>
  <span class="mark">CSDN @明宗元</span>
</footer>
</body>
</html>
```
FILE: styles.css
```css
* { box-sizing: border-box; }
body {
  margin: 0;
  height: 100vh;
  display: flex;
  flex-direction: column;
  overflow: hidden;
  background: #d6dbe9;
  color: #000;
  font: 17px/24px "Open Sans", "Noto Sans CJK SC", sans-serif;
}
button { border: 0; padding: 0; margin: 0; background: none; font: inherit; color: inherit; display: flex; align-items: center; flex: none; }
input, select { font: inherit; min-width: 0; }
ul { list-style: none; margin: 0; padding: 0; }
h2, h3 { margin: 0; font-weight: 400; font-size: 18px; }
svg { display: block; flex: none; }
.defs { width: 0; height: 0; position: absolute; }
.ic { width: 24px; height: 24px; }

.titlebar { height: 35px; flex: none; display: flex; align-items: center; gap: 8px; padding: 0 12px 2px 2px; border-bottom: 1px solid #bfc1c8; color: #8d96a6; }
.titlebar .ic { width: 23px; height: 23px; }
.winctl { margin-left: auto; display: flex; gap: 25px; color: #bdbdbd; padding-bottom: 2px; }

.menubar { height: 35px; display: flex; align-items: center; gap: 14px; padding: 0 14px 3px; border-left: 3px dotted #6c7690; font-size: 18px; }
.menubar, .navbar { flex: none; }

.navbar { height: 35px; display: flex; align-items: center; gap: 8px; padding: 1px 2px 1px 10px; border-left: 3px dotted #6c7690; background: #cfd6e5; }
.crumbs { flex: 1; height: 31px; background: #fcfcfc; display: flex; align-items: center; padding-left: 8px; gap: 14px; font: 15px/24px "Liberation Mono", monospace; color: #222b3c; }
.crumbs a { color: inherit; text-decoration: none; padding-top: 2px; }
.crumbs a[href="#root"] { padding: 2px 10px 0; }
.crumbs .cjk { font: 300 18px/24px "Noto Sans CJK SC", sans-serif; padding: 0 0 3px; }
.crumb { width: 6px; height: 12px; }
.find { width: 246px; height: 33px; border: 1px solid #8591a8; background: #fcfcfc; padding: 2px 1px 0; font: 15px/24px "Liberation Mono", monospace; margin: 0 -4px 0 -3px; }
.find::placeholder { color: #7c7c7c; opacity: 1; }
.navtools { display: flex; gap: 9px; align-items: center; padding-right: 5px; }
.navtools .sep { height: 32px; }

.workspace { flex: 1; min-height: 0; display: grid; grid-template-columns: 325px 161px minmax(0, 1fr) 36px; column-gap: 4px; background: #293955; padding-top: 1px; }
.left { display: grid; grid-template-rows: 429px minmax(0, 1fr); row-gap: 5px; min-height: 0; }
.panel { display: flex; flex-direction: column; min-height: 0; min-width: 0; overflow: hidden; background: #4d6082; }
.caption { height: 32px; flex: none; display: flex; align-items: center; padding: 0 5px 0 4px; background: #4d6082; color: #fff; font-size: 17px; white-space: nowrap; }
.capctl { margin-left: auto; display: flex; align-items: center; gap: 9px; }
.toolbar { height: 36px; flex: none; display: flex; align-items: center; gap: 9px; background: #cfd6e5; padding: 0 5px; }
.toolbar button { gap: 9px; }
.sep { width: 1px; height: 32px; background: #b9bfcc; flex: none; }
.caret { width: 7px; height: 4px; }

.treebox { flex: 1; min-height: 0; display: flex; background: #fff; border: 1px solid #bcc1cc; border-right: 0; overflow: hidden; }
.tree { flex: 1; font-size: 18px; line-height: 28px; }
.tree li { height: 28px; display: flex; align-items: center; gap: 5px; }
.tree .l0 { padding-left: 12px; }
.tree .l1 { padding-left: 38px; }
.tree .l2 { padding-left: 91px; }
.tree .box { width: 13px; height: 13px; margin-right: 9px; fill: #fff; stroke: #8a8f9c; }
.tree .sel { background: #bdc2cc; color: #1b2a45; }
.vscroll { width: 27px; flex: none; display: flex; flex-direction: column; align-items: center; background: #d5dae8; padding: 10px 0 8px; gap: 9px; }
.arr { width: 13px; height: 7px; }
.vscroll svg, .hscroll svg { fill: #6a6a6a; }
.end { margin-top: auto; }
.thumb { width: 18px; background: #bdc2cc; height: 250px; }
.thumb.small { height: 22px; }
.tabs { height: 30px; flex: none; display: flex; align-items: stretch; background: #4d6082; color: #d3dbea; }
.tabs button { padding: 0 6px 2px 4px; gap: 3px; }
.tabs .on { background: #fcfcfc; color: #0e639c; border-bottom: 1px solid #bcc1cc; }

.ptools { padding: 0 2px; height: 37px; gap: 8px; }
.pressed { width: 33px; height: 33px; justify-content: center; background: #fdf4bf; border: 1px solid #e5c365; }
.ptools .pressed { margin-right: -3px; }
.dim { opacity: .6; }
.grid { width: 100%; border-collapse: collapse; table-layout: fixed; background: #fff; font: 18px/16px "Noto Sans CJK SC", sans-serif; color: #9aa1ad; font-weight: 300; }
.grid .c0 { width: 22px; }
.grid .c1 { width: 108px; }
.grid tr { height: 22px; }
.grid th, .grid td { padding: 0 0 7px; text-align: left; border-bottom: 1px solid #e6e9f3; line-height: 14px; }
.grid td { padding-left: 5px; border-right: 1px solid #e6e9f3; }
.grid th { background: #e6e9f3; color: #1e1e1e; font-weight: 700; padding-left: 5px; }
.grid svg { margin: 4px 0 -4px; }
.gridrest { flex: 1; background: linear-gradient(90deg, #fff 130px, #e6e9f3 130px, #e6e9f3 131px, #fff 131px); }

.more { display: block; text-align: left; height: 23px; background: #d5dae8; color: #44516a; font: 300 18px/18px "Noto Sans CJK SC", sans-serif; padding: 0 0 2px 37px; }
.more span { font: 15px/18px "Liberation Mono", monospace; }
.tbody { flex: 1; background: #fcfcfc; padding: 0 2px; min-height: 0; overflow: hidden; }
.tbody h3 { height: 27px; display: flex; align-items: center; gap: 7px; padding: 0 0 2px 8px; background: #e6e9f3; color: #1b2a45; font-weight: 700; font-size: 17px; white-space: nowrap; overflow: hidden; }
.tbody h3 + h3 { margin-top: 2px; }
.tbody ul { padding: 5px 5px 7px 33px; }
.tbody li { height: 32px; display: flex; align-items: center; gap: 8px; color: #1b2a45; font-size: 17px; white-space: nowrap; overflow: hidden; }

.main { min-width: 0; display: flex; flex-direction: column; background: #d5dae8; }
.viewcap { height: 41px; flex: none; display: flex; align-items: center; gap: 10px; border: 1px solid #a0a0a0; padding: 0 6px; color: #6d6d6d; font: 16px/24px "Liberation Sans", "Noto Sans CJK SC", sans-serif; }
.viewcap span { margin-left: 9px; padding-top: 2px; }
.viewctl { margin-left: auto; display: flex; gap: 16px; align-items: center; }
.doctabs { height: 30px; flex: none; display: flex; background: #4d6082; border-bottom: 1px solid #293955; padding-top: 2px; color: #d3dbea; }
.doctab { padding: 0 8px 0 3px; gap: 2px; font-size: 17px; }
.doctab.on { background: #fcfcfc; color: #005c99; font-weight: 700; padding-left: 4px; gap: 2px; }
.doctab .x { margin-left: 14px; color: #6a6a6a; }
.tabnav { margin-left: auto; display: flex; gap: 3px; align-items: center; padding-right: 2px; }
.tabnav button { background: #293955; }
.dtools { padding: 0 1px 2px 4px; }
.dtools .sep { margin: 0 -1px; }
.dtools .wide { width: 29px; }
.spin { display: flex; width: 46px; height: 30px; border: 1px solid #a9b1c2; background: #fcfcfc; margin: 0 -4px 0 -1px; }
.spin input { width: 17px; border: 0; padding: 0 0 6px 2px; background: #cfd6e5; color: #6a7488; }
.selwrap { display: grid; width: 145px; height: 29px; align-items: center; }
.selwrap > * { grid-area: 1 / 1; }
.selwrap select { appearance: none; height: 29px; border: 1px solid #8591a8; border-radius: 0; background: #fcfcfc; padding: 0 2px; color: #1b2a45; }
.selwrap .caret { justify-self: end; margin-right: 8px; }
.filter { width: 116px; height: 30px; border: 1px solid #8591a8; background: #fcfcfc; margin: 0 -3px; }
.flip { transform: scaleX(-1); }
.turn { transform: rotate(90deg); }
.turnback { transform: rotate(-90deg); }
.overflow { margin-left: auto; width: 14px; height: 33px; background: #dce0ec; justify-content: center; align-items: flex-end; padding-bottom: 6px; }

.view { flex: 1; min-height: 0; display: grid; grid-template-columns: minmax(0, 1fr) 26px; grid-template-rows: minmax(0, 1fr) 26px; padding: 0 0 1px 1px; }
.canvas { width: 100%; height: 100%; overflow: hidden; background: linear-gradient(#dce3f0, #e5e8f3 35%, #f5f6fb); }
.tall { width: 26px; padding: 10px 0 8px; gap: 9px; }
.hscroll { display: flex; align-items: center; gap: 8px; padding: 0 10px; }
.hscroll .thumb { width: 57%; height: 18px; }
.hscroll .end { margin: 0 0 0 auto; }
.pageedge { stroke: #999; stroke-width: 3; }
.wire { stroke: #111; stroke-width: 1.3; fill: none; }
.shadow { fill: #ced0d8; }
.node { fill: #fff; stroke: #111; stroke-width: 1.3; }
.rhomb { fill: #fcf1e2; stroke: #111; stroke-width: 1.2; }
.cut { fill: #f2f3f8; }
.cut rect:first-child { fill: #e6e9f4; }
.label { font: 12px "Liberation Sans", "Noto Sans CJK SC", sans-serif; text-anchor: middle; }
.mult { font: 13px "Liberation Sans", sans-serif; text-anchor: middle; fill: #222; }
.marker { fill: none; stroke: #e81c1c; stroke-width: 15; stroke-linejoin: round; }

.dock { padding-top: 7px; color: #d3dbea; }
.dock button { writing-mode: vertical-rl; text-orientation: sideways; margin-left: auto; height: 38px; width: 36px; padding-right: 7px; border-right: 6px solid #4d6082; font-size: 17px; line-height: 18px; }

.status { height: 31px; flex: none; position: relative; display: flex; align-items: center; gap: 17px; padding: 3px 13px 0 3px; background: #007acc; color: #fff; white-space: nowrap; }
.zoom { margin-left: auto; display: flex; align-items: center; gap: 15px; align-self: stretch; }
.zoom input { appearance: none; width: 81px; height: 26px; margin: 2px 0 0; background: linear-gradient(#8090a8, #8090a8) center / 100% 1px no-repeat; }
.zoom input::-webkit-slider-thumb { appearance: none; width: 6px; height: 26px; background: #d5dae8; border: 1px solid #8591a8; }
.key { color: #7c828e; }
.key + .key { margin-left: 4px; }
.mark { position: absolute; right: 16px; top: 2px; color: #d8e4f0; font: 14px/24px "Liberation Sans", "Noto Sans CJK SC", sans-serif; text-shadow: 1px 1px 1px #555; }
```
